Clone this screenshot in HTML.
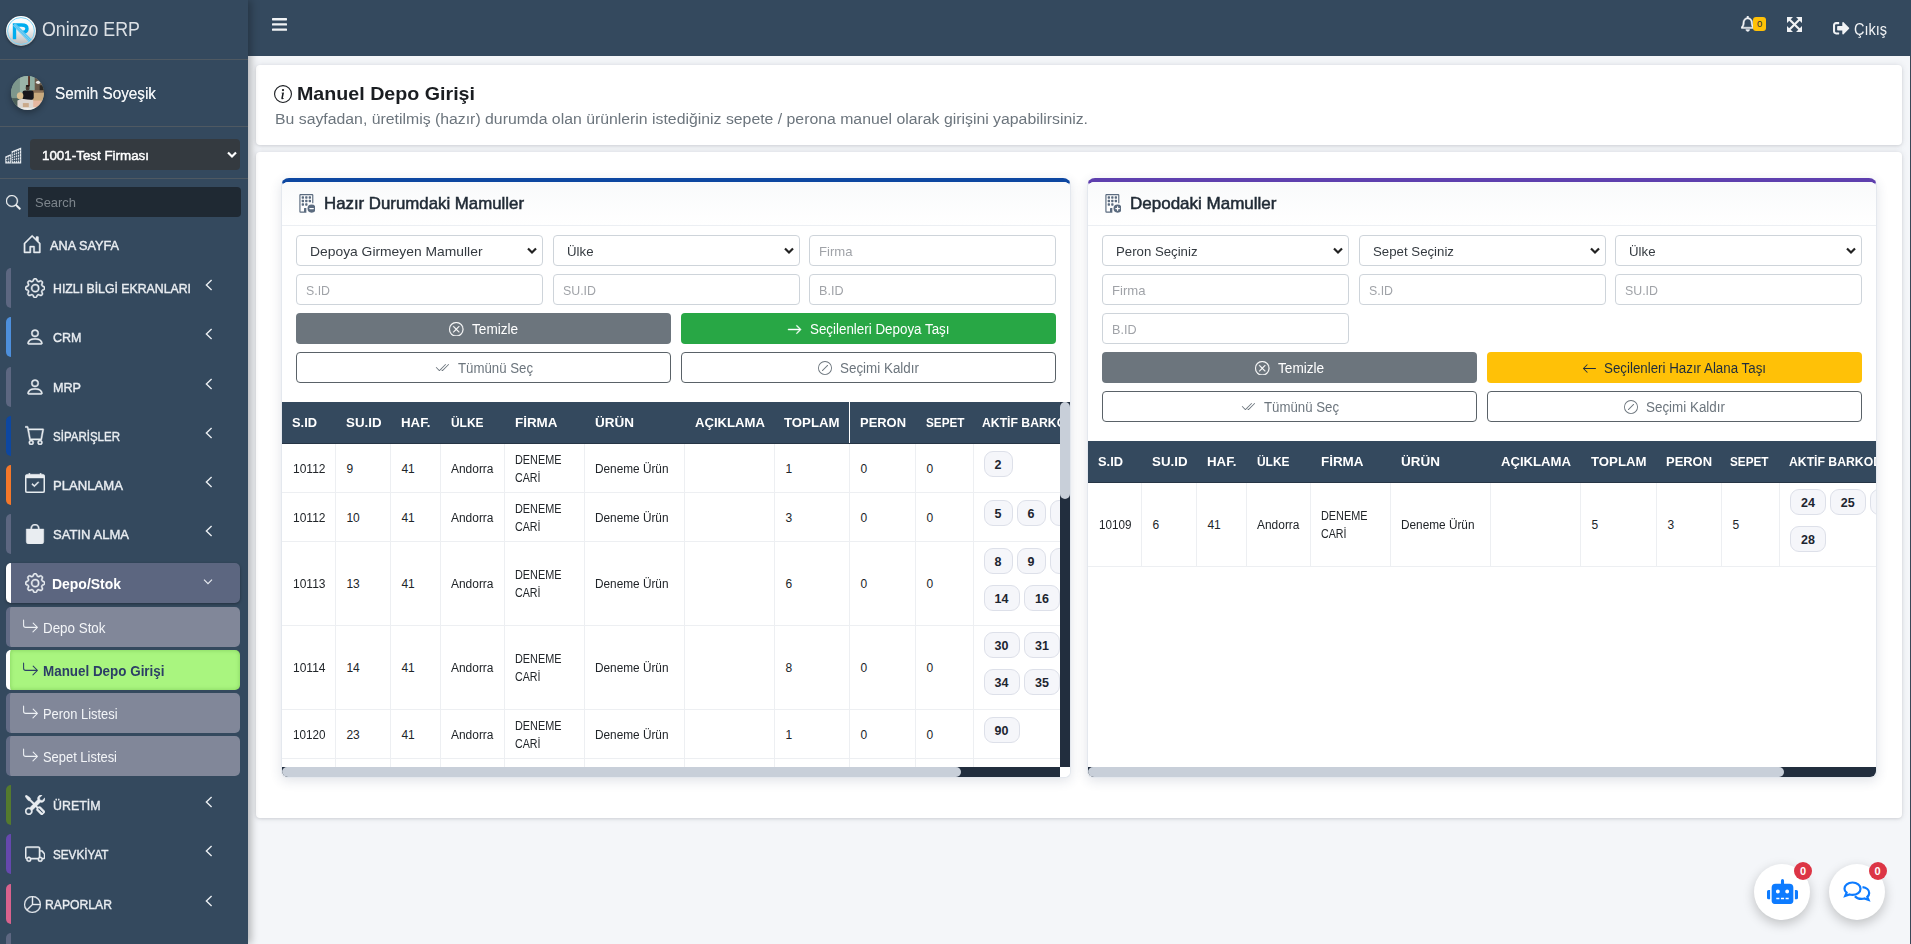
<!DOCTYPE html>
<html lang="tr"><head>
<meta charset="utf-8">
<title>Manuel Depo Girişi</title>
<style>
*{box-sizing:border-box;margin:0;padding:0}
html,body{width:1911px;height:944px;overflow:hidden}
body{position:relative;background:#f4f6f9;font-family:"Liberation Sans",sans-serif;color:#212529;font-size:14px}
.abs{position:absolute}
.fx{display:inline-block;white-space:nowrap;transform-origin:0 50%}
svg{display:block;position:absolute}
/* sidebar */
#sb{position:absolute;left:0;top:0;width:248px;height:944px;background:#34495e;box-shadow:3px 0 8px rgba(0,0,0,.28);z-index:5;overflow:hidden}
#sb .hr{position:absolute;left:0;width:248px;height:1px;background:#4f5962}
.mi{position:absolute;left:6px;width:234px;height:40px;border-left:5px solid #5d6781;border-radius:5px 0 0 5px}
.mi .tx{position:absolute;left:41.5px;top:0;height:40px;line-height:41px;font-size:13.5px;font-weight:normal;-webkit-text-stroke:.4px #e9edf1;color:#e9edf1}
.mi svg.ic{left:14px;top:10px;width:20px;height:20px;fill:#e9edf1;stroke:#e9edf1;stroke-width:.35}
.mi svg.ch{left:192.7px;top:11px;width:10px;height:12px;fill:none;stroke:#e9edf1;stroke-width:1.4}
.si{position:absolute;left:6px;width:234px;height:40px;background:#818799;border-left:4px solid #636c86;border-radius:5px}
.si .tx{position:absolute;left:32.5px;top:0;height:40px;line-height:42.6px;font-size:14px;color:#f3f5f8}
.si svg{left:11.5px;top:11px;width:17px;height:17px;fill:#eef1f5}
/* topbar */
#tb{position:absolute;left:248px;top:0;width:1663px;height:56px;background:#34495e;z-index:3}
#tb svg{fill:#f1f3f5}
/* cards */
.card{position:absolute;background:#fff;border-radius:4px;box-shadow:0 0 6px rgba(60,70,90,.13),0 1px 3px rgba(0,0,0,.10)}
.pn{position:absolute;top:178px;width:790px;height:600px;background:#fff;border-radius:8px 8px 6px 6px;box-shadow:0 3px 12px rgba(40,60,90,.14);border:1px solid #e4e8ee;border-top:4px solid #000;overflow:hidden}
.pn .top{position:absolute;left:-1px;top:0;width:788px;height:3.5px}
.pn .hd{position:absolute;left:0;top:0;width:788px;height:44px;border-bottom:1px solid #eceff3;background:linear-gradient(#f9fafb,#fff)}
.pn .hd .tt{position:absolute;top:0;height:44px;line-height:43.4px;font-size:16.2px;font-weight:normal;-webkit-text-stroke:.5px #212b36;color:#212b36}
.inp{position:absolute;height:31px;width:247px;border:1px solid #ced4da;border-radius:4px;background:#fff;font-size:13.5px;line-height:31px}
.inp .ph{position:absolute;left:8.5px;top:0;color:#a0a3a8}
.inp .vl{position:absolute;left:13px;top:0;color:#343a40}
.inp svg{right:5px;top:10.5px;width:10px;height:8px;fill:none;stroke:#222;stroke-width:2.2}
.btn{position:absolute;height:31px;width:375px;border-radius:4px;font-size:14px;line-height:33.6px}
.btn .tx{position:absolute;top:0}
.btn svg{top:8.6px;width:15px;height:15px}
.b-gray{background:#6c757d;color:#fff}.b-gray svg{fill:#fff;stroke:#fff;stroke-width:.3}
.b-green{background:#28a745;color:#fff}.b-green svg{fill:#fff;stroke:#fff;stroke-width:.5}
.b-yel{background:#ffc107;color:#1f2d3d}.b-yel svg{fill:#1f2d3d}
.b-out{background:#fff;border:1px solid #5a6268;color:#6c757d;line-height:31px}.b-out svg{fill:#6c757d;top:8px}
/* table */
.tw{position:absolute;overflow:hidden;background:#fff}
.th{position:absolute;left:0;top:0;height:42px;background:#34495e;border-bottom:1px solid #263545}
.th span{position:absolute;top:0;height:41px;line-height:42px;font-size:13px;font-weight:bold;color:#fff}
.vl1{position:absolute;width:1px;background:#edeff2}
.hl1{position:absolute;height:1px;background:#edeff2;left:0}
.c{position:absolute;font-size:12px;color:#212529;line-height:18px;white-space:nowrap}
.bd{position:absolute;height:26px;border:1px solid #dde0e9;background:#f5f6fa;border-radius:9px;font-size:12.5px;font-weight:bold;color:#1d2530;text-align:center;line-height:26.6px}
.fab{position:absolute;width:56px;height:56px;border-radius:50%;background:#fff;box-shadow:0 4px 12px rgba(0,0,0,.22)}
.fab svg{fill:#0d7bff}
.rb{position:absolute;width:18px;height:18px;border-radius:50%;background:#dc3545;color:#fff;font-size:11px;font-weight:bold;text-align:center;line-height:18px}
</style>
</head>
<body>
<div id="sb">
<div class="abs" style="left:6px;top:15.8px;width:30px;height:30px;border-radius:50%;background:linear-gradient(#fff 0,#f8f8f8 38%,#d4d4d4 72%,#b4b4b4 100%);box-shadow:0 1px 3px rgba(0,0,0,.4);overflow:hidden"><svg viewBox="0 0 30 30" style="left:0;top:0;width:30px;height:30px"><circle cx="15" cy="15" r="13.4" fill="none" stroke="#7fd4f6" stroke-width="1"></circle><path d="M8.500 23.200V9H15.600C19.600 9 21 10.800 21 12.700 21 14.900 19.300 16.200 16.600 16.400" fill="none" stroke="#00adef" stroke-width="3.400" stroke-linejoin="miter"></path><path d="M8.200 8.600 24.300 24.700" stroke="#43bdf0" stroke-width="3.600" fill="none"></path><path d="M8.200 8.600 24.300 24.700" stroke="#bfe8fa" stroke-width="3.200" stroke-dasharray=".7 .7" fill="none" opacity=".55"></path></svg></div>
<div class="abs" style="left:41.5px;top:17.3px;font-size:19.6px;line-height:24px;color:#eef1f4;opacity:.9"><span class="fx" style="transform: scaleX(0.9089); margin-right: -9.83px;">Oninzo ERP</span></div>
<div class="hr" style="top:59px"></div>
<div class="abs" style="left:10.800px;top:75.700px;width:33.600px;height:34.400px;border-radius:50%;box-shadow:0 3px 6px rgba(0,0,0,.3);overflow:hidden;background:#7f998f"><svg viewBox="0 0 34 34" style="left:0;top:0;width:33.600px;height:34.400px"><defs><filter id="bl" x="-10%" y="-10%" width="120%" height="120%"><feGaussianBlur stdDeviation=".5"></feGaussianBlur></filter></defs><g filter="url(#bl)"><rect x="-2" y="-2" width="38" height="38" fill="#7d978c"></rect><rect x="9" y="-2" width="9" height="22" fill="#9bb5a8"></rect><rect x="19" y="-2" width="6" height="16" fill="#8fada3"></rect><rect x="17.300" y="-2" width="1.900" height="12" fill="#5a3326"></rect><rect x="24" y="-2" width="12" height="18" fill="#6b5a4c"></rect><ellipse cx="27.500" cy="6" rx="2.200" ry="1.600" fill="#e8e6e6"></ellipse><rect x="29" y="9" width="6" height="7" fill="#2a2623"></rect><rect x="21" y="14" width="12" height="3" fill="#8a6f55"></rect><rect x="0" y="22" width="8" height="12" fill="#4c5f58"></rect><rect x="21" y="16.500" width="14" height="8.500" rx="1.500" fill="#c9aa7e"></rect><rect x="22" y="24.500" width="14" height="8" fill="#e6b79f"></rect><rect x="11.500" y="14.300" width="11.500" height="9.500" rx="2.500" fill="#15171a"></rect><ellipse cx="16.800" cy="11.800" rx="2" ry="2.600" fill="#4a3a30"></ellipse><rect x="15" y="8.800" width="3.600" height="1.800" rx=".9" fill="#1c1815"></rect><ellipse cx="9.200" cy="19.600" rx="3.300" ry="3.600" fill="#d9bf92"></ellipse><path d="M6.500 24.500C9 22.500 14 22.500 16.500 23.500L22.500 24V31.500H6.500z" fill="#dcd6d1"></path><rect x="12" y="27" width="6" height="5" fill="#c9a98a"></rect><rect x="-2" y="31.300" width="38" height="4" fill="#eceae8"></rect></g></svg></div>
<div class="abs" style="left:54.5px;top:82.2px;font-size:16px;line-height:24px;color:#eef1f4;text-shadow:0 0 .4px #eef1f4"><span class="fx" style="transform: scaleX(0.9544); margin-right: -4.83px;">Semih Soyeşik</span></div>
<div class="hr" style="top:126px"></div>
<svg viewBox="0 0 17 17" style="left:5px;top:146.5px;width:17px;height:17px"><path d="M6.3 16.4V4.5L16.2.4v16z" fill="#e9edf1"></path><path d="M.3 16.400V9.400l6-2.300v9.300z" fill="#e9edf1"></path><g stroke="#34495e" stroke-width=".9" fill="none"><path d="M8.400 5v10.300M10.400 4.200v11.100M12.400 3.400v11.900M14.400 2.600v12.700"></path><path d="M7.200 6.900l8.200-3.300M7.200 9.300l8.200-2.600M7.200 11.600l8.200-1.800M7.200 13.800l8.200-.9"></path><path d="M2.300 9.800v5.500M4.300 9v6.300M1.200 11.600l4.300-1.300M1.200 13.700l4.300-.8"></path></g><path d="M6.300 16.400V4.500" stroke="#34495e" stroke-width=".6"></path></svg>
<div class="abs" style="left:30px;top:139px;width:210px;height:31px;border-radius:4px;background:#343a40"><div class="abs" style="left:12px;top:0;line-height:33.4px;font-size:13.5px;-webkit-text-stroke:.45px #fff;color:#fff"><span class="fx" style="transform: scaleX(0.9903); margin-right: -1.05px;">1001-Test Firması</span></div><svg viewBox="0 0 10 8" style="left:197px;top:11.5px;width:10px;height:8px" fill="none" stroke="#fff" stroke-width="2.2"><path d="M1 1.5l4 4 4-4"></path></svg></div>
<div class="hr" style="top:178px"></div>
<svg style="left:6px;top:195px;width:14.6px;height:14.6px;fill:#f1f3f5;stroke:#f1f3f5;stroke-width:.4" viewBox="0 0 16 16"><path d="M11.742 10.344a6.5 6.5 0 1 0-1.397 1.398h-.001c.03.04.062.078.098.115l3.85 3.85a1 1 0 0 0 1.415-1.414l-3.85-3.85a1.007 1.007 0 0 0-.115-.1zM12 6.5a5.5 5.5 0 1 1-11 0 5.5 5.5 0 0 1 11 0z"></path></svg>
<div class="abs" style="left:28px;top:187px;width:213px;height:30px;border-radius:0 4px 4px 0;background:#1f2933"><div class="abs" style="left:7px;top:0;line-height:32px;font-size:13px;color:#7d858c"><span class="fx" style="transform: scaleX(0.9951); margin-right: -0.2px;">Search</span></div></div>
<svg style="left:21.9px;top:233.7px;width:20.3px;height:20.3px;fill:#e9edf1;stroke:#e9edf1;stroke-width:.35" viewBox="0 0 16 16"><path d="M8.354 1.146a.5.5 0 0 0-.708 0l-6 6A.5.5 0 0 0 1.5 7.5v7a.5.5 0 0 0 .5.5h4.5a.5.5 0 0 0 .5-.5v-4h2v4a.5.5 0 0 0 .5.5H14a.5.5 0 0 0 .5-.5v-7a.5.5 0 0 0-.146-.354L13 5.793V2.5a.5.5 0 0 0-.5-.5h-1a.5.5 0 0 0-.5.5v1.293L8.354 1.146zM2.5 14V7.707l5.5-5.5 5.5 5.5V14H10v-4a.5.5 0 0 0-.5-.5h-3a.5.5 0 0 0-.5.5v4H2.5z"></path></svg>
<div class="abs" style="left:49.5px;top:225px;line-height:41px;font-size:13px;-webkit-text-stroke:.4px #e9edf1;color:#e9edf1"><span class="fx" style="transform: scaleX(0.9776); margin-right: -1.58px;">ANA SAYFA</span></div>
<div class="mi" style="top:268px;border-left-color:#5d6781"><svg class="ic" style="left:14px;top:9.7px;width:20.3px;height:20.3px" viewBox="0 0 16 16"><path d="M8 4.754a3.246 3.246 0 1 0 0 6.492 3.246 3.246 0 0 0 0-6.492zM5.754 8a2.246 2.246 0 1 1 4.492 0 2.246 2.246 0 0 1-4.492 0z"></path><path d="M9.796 1.343c-.527-1.79-3.065-1.79-3.592 0l-.094.319a.873.873 0 0 1-1.255.52l-.292-.16c-1.64-.892-3.433.902-2.54 2.541l.159.292a.873.873 0 0 1-.52 1.255l-.319.094c-1.79.527-1.79 3.065 0 3.592l.319.094a.873.873 0 0 1 .52 1.255l-.16.292c-.892 1.64.901 3.434 2.541 2.54l.292-.159a.873.873 0 0 1 1.255.52l.094.319c.527 1.79 3.065 1.79 3.592 0l.094-.319a.873.873 0 0 1 1.255-.52l.292.16c1.64.893 3.434-.902 2.54-2.541l-.159-.292a.873.873 0 0 1 .52-1.255l.319-.094c1.79-.527 1.79-3.065 0-3.592l-.319-.094a.873.873 0 0 1-.52-1.255l.16-.292c.893-1.64-.902-3.433-2.541-2.54l-.292.159a.873.873 0 0 1-1.255-.52l-.094-.319zm-2.633.283c.246-.835 1.428-.835 1.674 0l.094.319a1.873 1.873 0 0 0 2.693 1.115l.291-.16c.764-.415 1.6.42 1.184 1.185l-.159.292a1.873 1.873 0 0 0 1.116 2.692l.318.094c.835.246.835 1.428 0 1.674l-.319.094a1.873 1.873 0 0 0-1.115 2.693l.16.291c.415.764-.42 1.6-1.185 1.184l-.291-.159a1.873 1.873 0 0 0-2.693 1.116l-.094.318c-.246.835-1.428.835-1.674 0l-.094-.319a1.873 1.873 0 0 0-2.692-1.115l-.292.16c-.764.415-1.6-.42-1.184-1.185l.159-.291A1.873 1.873 0 0 0 1.945 8.93l-.319-.094c-.835-.246-.835-1.428 0-1.674l.319-.094A1.873 1.873 0 0 0 3.06 4.377l-.16-.292c-.415-.764.42-1.6 1.185-1.184l.292.159a1.873 1.873 0 0 0 2.692-1.115l.094-.319z"></path></svg><div class="tx" style="left:41.5px"><span class="fx" style="transform: scaleX(0.9106); margin-right: -13.55px;">HIZLI BİLGİ EKRANLARI</span></div><svg class="ch" viewBox="0 0 10 12"><path d="M7.6 1 2.4 6l5.2 5"></path></svg></div>
<div class="mi" style="top:317px;border-left-color:#4d8fdc"><svg class="ic" style="left:14.4px;top:9.5px;width:20px;height:20px" viewBox="0 0 16 16"><path d="M8 8a3 3 0 1 0 0-6 3 3 0 0 0 0 6zm2-3a2 2 0 1 1-4 0 2 2 0 0 1 4 0zm4 8c0 1-1 1-1 1H3s-1 0-1-1 1-4 6-4 6 3 6 4zm-1-.004c-.001-.246-.154-.986-.832-1.664C11.516 10.68 10.289 10 8 10c-2.29 0-3.516.68-4.168 1.332-.678.678-.83 1.418-.832 1.664h10z"></path></svg><div class="tx" style="left:41.5px"><span class="fx" style="transform: scaleX(0.9268); margin-right: -2.25px;">CRM</span></div><svg class="ch" viewBox="0 0 10 12"><path d="M7.6 1 2.4 6l5.2 5"></path></svg></div>
<div class="mi" style="top:367px;border-left-color:#5d6781"><svg class="ic" style="left:14.4px;top:9.5px;width:20px;height:20px" viewBox="0 0 16 16"><path d="M8 8a3 3 0 1 0 0-6 3 3 0 0 0 0 6zm2-3a2 2 0 1 1-4 0 2 2 0 0 1 4 0zm4 8c0 1-1 1-1 1H3s-1 0-1-1 1-4 6-4 6 3 6 4zm-1-.004c-.001-.246-.154-.986-.832-1.664C11.516 10.68 10.289 10 8 10c-2.29 0-3.516.68-4.168 1.332-.678.678-.83 1.418-.832 1.664h10z"></path></svg><div class="tx" style="left:41.5px"><span class="fx" style="transform: scaleX(0.9333); margin-right: -2px;">MRP</span></div><svg class="ch" viewBox="0 0 10 12"><path d="M7.6 1 2.4 6l5.2 5"></path></svg></div>
<div class="mi" style="top:416px;border-left-color:#0d47a1"><svg class="ic" style="left:14.2px;top:8.5px;width:20px;height:20px" viewBox="0 0 16 16"><path d="M0 1.5A.5.5 0 0 1 .5 1H2a.5.5 0 0 1 .485.379L2.89 3H14.5a.5.5 0 0 1 .491.592l-1.5 8A.5.5 0 0 1 13 12H4a.5.5 0 0 1-.491-.408L2.01 3.607 1.61 2H.5a.5.5 0 0 1-.5-.5zM3.102 4l1.313 7h8.17l1.313-7H3.102zM5 12a2 2 0 1 0 0 4 2 2 0 0 0 0-4zm7 0a2 2 0 1 0 0 4 2 2 0 0 0 0-4zm-7 1a1 1 0 1 1 0 2 1 1 0 0 1 0-2zm7 0a1 1 0 1 1 0 2 1 1 0 0 1 0-2z"></path></svg><div class="tx" style="left:41.5px"><span class="fx" style="transform: scaleX(0.8532); margin-right: -11.53px;">SİPARİŞLER</span></div><svg class="ch" viewBox="0 0 10 12"><path d="M7.6 1 2.4 6l5.2 5"></path></svg></div>
<div class="mi" style="top:465px;border-left-color:#f4772a"><svg class="ic" style="left:14.2px;top:7.9px;width:20px;height:20px" viewBox="0 0 16 16"><path d="M10.854 7.146a.5.5 0 0 1 0 .708l-3 3a.5.5 0 0 1-.708 0l-1.5-1.5a.5.5 0 1 1 .708-.708L7.5 9.793l2.646-2.647a.5.5 0 0 1 .708 0z"></path><path d="M3.5 0a.5.5 0 0 1 .5.5V1h8V.5a.5.5 0 0 1 1 0V1h1a2 2 0 0 1 2 2v11a2 2 0 0 1-2 2H2a2 2 0 0 1-2-2V3a2 2 0 0 1 2-2h1V.5a.5.5 0 0 1 .5-.5zM1 4v10a1 1 0 0 0 1 1h12a1 1 0 0 0 1-1V4H1z"></path></svg><div class="tx" style="left:41.5px"><span class="fx" style="transform: scaleX(0.9718); margin-right: -2.03px;">PLANLAMA</span></div><svg class="ch" viewBox="0 0 10 12"><path d="M7.6 1 2.4 6l5.2 5"></path></svg></div>
<div class="mi" style="top:514px;border-left-color:#5d6781"><svg class="ic" style="left:14.2px;top:9.6px;width:20px;height:20px" viewBox="0 0 16 16"><path d="M8 1a2.5 2.5 0 0 1 2.5 2.5V4h-5v-.5A2.5 2.5 0 0 1 8 1zm3.5 3v-.5a3.5 3.5 0 1 0-7 0V4H1v10a2 2 0 0 0 2 2h10a2 2 0 0 0 2-2V4h-3.5z"></path></svg><div class="tx" style="left:41.5px"><span class="fx" style="transform: scaleX(0.9678); margin-right: -2.53px;">SATIN ALMA</span></div><svg class="ch" viewBox="0 0 10 12"><path d="M7.6 1 2.4 6l5.2 5"></path></svg></div>
<div class="mi" style="top:785px;border-left-color:#547a2e"><svg class="ic" style="left:14.2px;top:9.8px;width:20px;height:20px" viewBox="0 0 16 16"><path d="M1 0 0 1l2.2 3.081a1 1 0 0 0 .815.419h.07a1 1 0 0 1 .708.293l2.675 2.675-2.617 2.654A3.003 3.003 0 0 0 0 13a3 3 0 1 0 5.878-.851l2.654-2.617.968.968-.305.914a1 1 0 0 0 .242 1.023l3.27 3.27a.997.997 0 0 0 1.414 0l1.586-1.586a.997.997 0 0 0 0-1.414l-3.27-3.27a1 1 0 0 0-1.023-.242L10.5 9.5l-.96-.96 2.68-2.643A3.005 3.005 0 0 0 16 3c0-.269-.035-.53-.102-.777l-2.14 2.141L12 4l-.364-1.757L13.777.102a3 3 0 0 0-3.675 3.68L7.462 6.46 4.793 3.793a1 1 0 0 1-.293-.707v-.071a1 1 0 0 0-.419-.814L1 0zm9.646 10.646a.5.5 0 0 1 .708 0l2.914 2.915a.5.5 0 0 1-.707.707l-2.915-2.914a.5.5 0 0 1 0-.708zM3 11l.471.242.529.026.287.445.445.287.026.529L5 13l-.242.471-.026.529-.445.287-.287.445-.529.026L3 15l-.471-.242L2 14.732l-.287-.445L1.268 14l-.026-.529L1 13l.242-.471.026-.529.445-.287.287-.445.529-.026L3 11z"></path></svg><div class="tx" style="left:41.5px"><span class="fx" style="transform: scaleX(0.9179); margin-right: -4.25px;">ÜRETİM</span></div><svg class="ch" viewBox="0 0 10 12"><path d="M7.6 1 2.4 6l5.2 5"></path></svg></div>
<div class="mi" style="top:834px;border-left-color:#6548ae"><svg class="ic" style="left:14px;top:9.5px;width:20.3px;height:20.3px" viewBox="0 0 16 16"><path d="M0 3.5A1.5 1.5 0 0 1 1.5 2h9A1.5 1.5 0 0 1 12 3.5V5h1.02a1.5 1.5 0 0 1 1.17.563l1.481 1.85a1.5 1.5 0 0 1 .329.938V10.5a1.5 1.5 0 0 1-1.5 1.5H14a2 2 0 1 1-4 0H5a2 2 0 1 1-3.998-.085A1.5 1.5 0 0 1 0 10.5v-7zm1.294 7.456A1.999 1.999 0 0 1 4.732 11h5.536a2.01 2.01 0 0 1 .732-.732V3.5a.5.5 0 0 0-.5-.5h-9a.5.5 0 0 0-.5.5v7a.5.5 0 0 0 .294.456zM12 10a2 2 0 0 1 1.732 1h.768a.5.5 0 0 0 .5-.5V8.35a.5.5 0 0 0-.11-.312l-1.48-1.85A.5.5 0 0 0 13.02 6H12v4zm-9 1a1 1 0 1 0 0 2 1 1 0 0 0 0-2zm9 0a1 1 0 1 0 0 2 1 1 0 0 0 0-2z"></path></svg><div class="tx" style="left:41.5px"><span class="fx" style="transform: scaleX(0.8668); margin-right: -8.53px;">SEVKİYAT</span></div><svg class="ch" viewBox="0 0 10 12"><path d="M7.6 1 2.4 6l5.2 5"></path></svg></div>
<div class="mi" style="top:884px;border-left-color:#d9628d"><svg class="ic" style="left:13.3px;top:11.6px;width:17px;height:17px" viewBox="0 0 16 16"><path d="M7.5 1.018a7 7 0 0 0-4.79 11.566L7.5 7.793V1.018zm1 0V7.5h6.482A7.001 7.001 0 0 0 8.5 1.018zM14.982 8.5H8.207l-4.79 4.79A7 7 0 0 0 14.982 8.5zM0 8a8 8 0 1 1 16 0A8 8 0 0 1 0 8z"></path></svg><div class="tx" style="left:34.3px"><span class="fx" style="transform: scaleX(0.902); margin-right: -7.28px;">RAPORLAR</span></div><svg class="ch" viewBox="0 0 10 12"><path d="M7.6 1 2.4 6l5.2 5"></path></svg></div>
<div class="mi" style="top:933px"></div>
<div class="mi" style="top:563px;border-left-color:#fff;background:#5c6680;border-radius:5px;box-shadow:0 1px 3px rgba(0,0,0,.35)"><svg class="ic" style="left:14px;top:9.7px;width:20.3px;height:20.3px" viewBox="0 0 16 16"><path d="M8 4.754a3.246 3.246 0 1 0 0 6.492 3.246 3.246 0 0 0 0-6.492zM5.754 8a2.246 2.246 0 1 1 4.492 0 2.246 2.246 0 0 1-4.492 0z"></path><path d="M9.796 1.343c-.527-1.79-3.065-1.79-3.592 0l-.094.319a.873.873 0 0 1-1.255.52l-.292-.16c-1.64-.892-3.433.902-2.54 2.541l.159.292a.873.873 0 0 1-.52 1.255l-.319.094c-1.79.527-1.79 3.065 0 3.592l.319.094a.873.873 0 0 1 .52 1.255l-.16.292c-.892 1.64.901 3.434 2.541 2.54l.292-.159a.873.873 0 0 1 1.255.52l.094.319c.527 1.79 3.065 1.79 3.592 0l.094-.319a.873.873 0 0 1 1.255-.52l.292.16c1.64.893 3.434-.902 2.54-2.541l-.159-.292a.873.873 0 0 1 .52-1.255l.319-.094c1.79-.527 1.79-3.065 0-3.592l-.319-.094a.873.873 0 0 1-.52-1.255l.16-.292c.893-1.64-.902-3.433-2.541-2.54l-.292.159a.873.873 0 0 1-1.255-.52l-.094-.319zm-2.633.283c.246-.835 1.428-.835 1.674 0l.094.319a1.873 1.873 0 0 0 2.693 1.115l.291-.16c.764-.415 1.6.42 1.184 1.185l-.159.292a1.873 1.873 0 0 0 1.116 2.692l.318.094c.835.246.835 1.428 0 1.674l-.319.094a1.873 1.873 0 0 0-1.115 2.693l.16.291c.415.764-.42 1.6-1.185 1.184l-.291-.159a1.873 1.873 0 0 0-2.693 1.116l-.094.318c-.246.835-1.428.835-1.674 0l-.094-.319a1.873 1.873 0 0 0-2.692-1.115l-.292.16c-.764.415-1.6-.42-1.184-1.185l.159-.291A1.873 1.873 0 0 0 1.945 8.93l-.319-.094c-.835-.246-.835-1.428 0-1.674l.319-.094A1.873 1.873 0 0 0 3.06 4.377l-.16-.292c-.415-.764.42-1.6 1.185-1.184l.292.159a1.873 1.873 0 0 0 2.692-1.115l.094-.319z"></path></svg><div class="tx" style="left:40.7px;color:#fff;font-size:14px;font-weight:bold;-webkit-text-stroke:0;line-height:42.6px"><span class="fx" style="transform: scaleX(0.9966); margin-right: -0.23px;">Depo/Stok</span></div><svg class="ch" viewBox="0 0 12 10" style="left:191px;top:15px;width:12px;height:8px"><path d="M1 2l5 5 5-5"></path></svg></div>
<div class="si" style="top:607px"><svg viewBox="0 0 16 16"><path fill-rule="evenodd" d="M1.5 1.5A.5.5 0 0 0 1 2v4.8a2.5 2.5 0 0 0 2.5 2.5h9.793l-3.347 3.346a.5.5 0 0 0 .708.708l4.2-4.2a.5.5 0 0 0 0-.708l-4-4a.5.5 0 0 0-.708.708L13.293 8.3H3.5A1.5 1.5 0 0 1 2 6.8V2a.5.5 0 0 0-.5-.5z"></path></svg><div class="tx"><span class="fx" style="transform: scaleX(0.956); margin-right: -2.88px;">Depo Stok</span></div></div>
<div class="si" style="top:650px;background:#a9f57f;border-left-color:#fff;box-shadow:inset 0 0 4px rgba(60,140,30,.35)"><svg style="fill:#2c3e66" viewBox="0 0 16 16"><path fill-rule="evenodd" d="M1.5 1.5A.5.5 0 0 0 1 2v4.8a2.5 2.5 0 0 0 2.5 2.5h9.793l-3.347 3.346a.5.5 0 0 0 .708.708l4.2-4.2a.5.5 0 0 0 0-.708l-4-4a.5.5 0 0 0-.708.708L13.293 8.3H3.5A1.5 1.5 0 0 1 2 6.8V2a.5.5 0 0 0-.5-.5z"></path></svg><div class="tx" style="color:#2c3e66;font-weight:bold;font-size:14px;left:33px"><span class="fx" style="transform: scaleX(0.9581); margin-right: -5.31px;">Manuel Depo Girişi</span></div></div>
<div class="si" style="top:693px"><svg viewBox="0 0 16 16"><path fill-rule="evenodd" d="M1.5 1.5A.5.5 0 0 0 1 2v4.8a2.5 2.5 0 0 0 2.5 2.5h9.793l-3.347 3.346a.5.5 0 0 0 .708.708l4.2-4.2a.5.5 0 0 0 0-.708l-4-4a.5.5 0 0 0-.708.708L13.293 8.3H3.5A1.5 1.5 0 0 1 2 6.8V2a.5.5 0 0 0-.5-.5z"></path></svg><div class="tx"><span class="fx" style="transform: scaleX(0.9205); margin-right: -6.44px;">Peron Listesi</span></div></div>
<div class="si" style="top:736px"><svg viewBox="0 0 16 16"><path fill-rule="evenodd" d="M1.5 1.5A.5.5 0 0 0 1 2v4.8a2.5 2.5 0 0 0 2.5 2.5h9.793l-3.347 3.346a.5.5 0 0 0 .708.708l4.2-4.2a.5.5 0 0 0 0-.708l-4-4a.5.5 0 0 0-.708.708L13.293 8.3H3.5A1.5 1.5 0 0 1 2 6.8V2a.5.5 0 0 0-.5-.5z"></path></svg><div class="tx"><span class="fx" style="transform: scaleX(0.923); margin-right: -6.17px;">Sepet Listesi</span></div></div>
</div>
<div id="tb">
<svg viewBox="0 0 15 13" style="left:24px;top:17.5px;width:15px;height:13px"><rect x="0" y="0" width="15" height="2.4" rx=".6"></rect><rect x="0" y="5.2" width="15" height="2.4" rx=".6"></rect><rect x="0" y="10.4" width="15" height="2.4" rx=".6"></rect></svg>
<svg viewBox="0 0 448 512" style="left:1493px;top:16px;width:13.5px;height:15.5px;stroke:#f1f3f5;stroke-width:14"><path d="M439.4 362.3c-19.3-20.8-55.5-52-55.5-154.3 0-77.700-54.500-139.900-127.900-155.200V32c0-17.700-14.300-32-32-32s-32 14.300-32 32v20.800C118.600 68.100 64.100 130.300 64.100 208c0 102.300-36.200 133.500-55.500 154.300-6 6.400-8.600 14.100-8.600 21.700.1 16.400 13 32 32.100 32h383.800c19.100 0 32-15.600 32.100-32 0-7.600-2.600-15.300-8.600-21.700zM67.500 368c21.200-28 44.400-74.300 44.500-159.400 0-.2-.1-.4-.1-.6 0-61.900 50.100-112 112-112s112 50.100 112 112c0 .2-.1.4-.1.6.1 85.100 23.300 131.500 44.500 159.400H67.500zM224 512c35.300 0 64-28.700 64-64H160c0 35.300 28.700 64 64 64z"></path></svg>
<div class="abs" style="left:1505.3px;top:17px;width:12.7px;height:14px;border-radius:3px;background:#ffc107;color:#1f2d3d;font-size:9.5px;line-height:14px;text-align:center">0</div>
<svg viewBox="0 0 16 16" style="left:1539px;top:16.500px;width:15px;height:15px"><path d="M0 0h6.400L0 6.400zM16 0v6.400L9.600 0zM0 16V9.600L6.400 16zM16 16H9.600L16 9.600z"></path><path d="M2.600 1l12.400 12.400-1.600 1.600L1 2.600z"></path><path d="M13.400 1L15 2.600 2.600 15 1 13.400z"></path></svg>
<svg viewBox="0 0 512 512" style="left:1585px;top:19.8px;width:16.5px;height:16.5px"><path d="M497 273L329 441c-15 15-41 4.500-41-17v-96H152c-13.300 0-24-10.700-24-24v-96c0-13.300 10.700-24 24-24h136V88c0-21.400 25.900-32 41-17l168 168c9.300 9.400 9.300 24.600 0 34zM192 436v-40c0-6.600-5.400-12-12-12H96c-17.700 0-32-14.300-32-32V160c0-17.700 14.300-32 32-32h84c6.600 0 12-5.400 12-12V76c0-6.600-5.400-12-12-12H96c-53 0-96 43-96 96v192c0 53 43 96 96 96h84c6.600 0 12-5.400 12-12z"></path></svg>
<div class="abs" style="left:1605.5px;top:17.3px;font-size:16.5px;line-height:24px;color:#f1f3f5"><span class="fx" style="transform: scaleX(0.8778); margin-right: -4.59px;">Çıkış</span></div>
</div>
<div class="abs" style="left:1910px;top:56px;width:1px;height:888px;background:#3a4757"></div>
<div class="card" style="left:256px;top:65px;width:1646px;height:80px">
<svg style="left:18px;top:19.5px;width:18px;height:18px;fill:#1a1d21" viewBox="0 0 16 16"><path d="M8 15A7 7 0 1 1 8 1a7 7 0 0 1 0 14zm0 1A8 8 0 1 0 8 0a8 8 0 0 0 0 16z"></path><path d="m8.93 6.588-2.29.287-.082.38.45.083c.294.07.352.176.288.469l-.738 3.468c-.194.897.105 1.319.808 1.319.545 0 1.178-.252 1.465-.598l.088-.416c-.2.176-.492.246-.686.246-.275 0-.375-.193-.304-.533L8.93 6.588zM9 4.5a1 1 0 1 1-2 0 1 1 0 0 1 2 0z"></path></svg>
<div class="abs" style="left:41px;top:16.2px;font-size:17.8px;line-height:26px;font-weight:bold;color:#1a1d21"><span class="fx" style="transform: scaleX(1.1052); margin-right: 16.94px;">Manuel Depo Girişi</span></div>
<div class="abs" style="left:18.5px;top:43.5px;font-size:14px;line-height:20px;color:#6c757d"><span class="fx" style="transform: scaleX(1.1295); margin-right: 93.19px;">Bu sayfadan, üretilmiş (hazır) durumda olan ürünlerin istediğiniz sepete / perona manuel olarak girişini yapabilirsiniz.</span></div>
</div>
<div class="card" style="left:256px;top:152px;width:1646px;height:666px"></div>
<div class="pn" style="left:281px;border-top-color:#0d47a1"><div class="hd">
<svg viewBox="0 0 16 16" style="left:14.7px;top:12.1px;width:18.7px;height:18.7px;fill:#5b6b7f"><path d="M12.5 16a3.5 3.5 0 1 0 0-7 3.5 3.5 0 0 0 0 7zM11 12h3a.5.5 0 0 1 0 1h-3a.5.5 0 0 1 0-1z"></path><path d="M2 1a1 1 0 0 1 1-1h10a1 1 0 0 1 1 1v6.5a.5.5 0 0 1-1 0V1H3v14h3v-2.5a.5.5 0 0 1 .5-.5H8v4H3a1 1 0 0 1-1-1V1z"></path><rect x="4" y="2" width="2" height="2" rx=".5"></rect><rect x="7" y="2" width="2" height="2" rx=".5"></rect><rect x="10" y="2" width="2" height="2" rx=".5"></rect><rect x="4" y="5" width="2" height="2" rx=".5"></rect><rect x="7" y="5" width="2" height="2" rx=".5"></rect><rect x="10" y="5" width="2" height="2" rx=".5"></rect><rect x="4" y="8" width="2" height="2" rx=".5"></rect><rect x="7" y="8" width="2" height="2" rx=".5"></rect></svg>
<div class="tt" style="left:41.6px"><span class="fx" style="transform: scaleX(1.039); margin-right: 7.5px;">Hazır Durumdaki Mamuller</span></div></div>
<div class="inp" style="left:14px;top:53px"><div class="vl"><span class="fx" style="transform: scaleX(1.0264); margin-right: 4.44px;">Depoya Girmeyen Mamuller</span></div><svg viewBox="0 0 10 8"><path d="M1 1.500l4 4 4-4"></path></svg></div>
<div class="inp" style="left:271px;top:53px"><div class="vl"><span class="fx" style="transform: scaleX(0.9809); margin-right: -0.52px;">Ülke</span></div><svg viewBox="0 0 10 8"><path d="M1 1.500l4 4 4-4"></path></svg></div>
<div class="inp" style="left:527px;top:53px"><div class="ph"><span class="fx" style="transform: scaleX(0.971); margin-right: -1px;">Firma</span></div></div>
<div class="inp" style="left:14px;top:92px"><div class="ph"><span class="fx" style="transform: scaleX(0.9137); margin-right: -2.27px;">S.ID</span></div></div>
<div class="inp" style="left:271px;top:92px"><div class="ph"><span class="fx" style="transform: scaleX(0.9163); margin-right: -3.02px;">SU.ID</span></div></div>
<div class="inp" style="left:527px;top:92px"><div class="ph"><span class="fx" style="transform: scaleX(0.9328); margin-right: -1.77px;">B.ID</span></div></div>
<div class="btn b-gray" style="left:14px;top:131px"><svg style="left:153px;width:14.5px;height:14.5px" viewBox="0 0 16 16"><path d="M8 15A7 7 0 1 1 8 1a7 7 0 0 1 0 14zm0 1A8 8 0 1 0 8 0a8 8 0 0 0 0 16z"></path><path d="M4.646 4.646a.5.5 0 0 1 .708 0L8 7.293l2.646-2.647a.5.5 0 0 1 .708.708L8.707 8l2.647 2.646a.5.5 0 0 1-.708.708L8 8.707l-2.646 2.647a.5.5 0 0 1-.708-.708L7.293 8 4.646 5.354a.5.5 0 0 1 0-.708z"></path></svg><div class="tx" style="left:175.5px"><span class="fx" style="transform: scaleX(0.9733); margin-right: -1.27px;">Temizle</span></div></div>
<div class="btn b-green" style="left:399px;top:131px"><svg style="left:106px;width:15px;height:15px" viewBox="0 0 16 16"><path fill-rule="evenodd" d="M1 8a.5.5 0 0 1 .5-.5h11.793l-3.147-3.146a.5.5 0 0 1 .708-.708l4 4a.5.5 0 0 1 0 .708l-4 4a.5.5 0 0 1-.708-.708L13.293 8.5H1.5A.5.5 0 0 1 1 8z"></path></svg><div class="tx" style="left:128.5px"><span class="fx" style="transform: scaleX(0.9552); margin-right: -6.55px;">Seçilenleri Depoya Taşı</span></div></div>
<div class="btn b-out" style="left:14px;top:170px"><svg style="left:138px;width:14px;height:14px" viewBox="0 0 16 16"><path d="M12.354 4.354a.5.5 0 0 0-.708-.708L5 10.293 1.854 7.146a.5.5 0 1 0-.708.708l3.5 3.5a.5.5 0 0 0 .708 0l7-7zm-4.208 7-.896-.897.707-.707.543.543 6.646-6.647a.5.5 0 0 1 .708.708l-7 7a.5.5 0 0 1-.708 0z"></path></svg><div class="tx" style="left:160.7px"><span class="fx" style="transform: scaleX(0.9449); margin-right: -4.38px;">Tümünü Seç</span></div></div>
<div class="btn b-out" style="left:399px;top:170px"><svg style="left:136px;width:14px;height:14px" viewBox="0 0 16 16"><path d="M8 15A7 7 0 1 1 8 1a7 7 0 0 1 0 14zm0 1A8 8 0 1 0 8 0a8 8 0 0 0 0 16z"></path><path d="M11.354 4.646a.5.5 0 0 0-.708 0l-6 6a.5.5 0 0 0 .708.708l6-6a.5.5 0 0 0 0-.708z"></path></svg><div class="tx" style="left:157.5px"><span class="fx" style="transform: scaleX(0.9579); margin-right: -3.47px;">Seçimi Kaldır</span></div></div>
</div>
<div class="pn" style="left:1087px;border-top-color:#5e3fae"><div class="hd">
<svg viewBox="0 0 16 16" style="left:14.7px;top:12.1px;width:18.7px;height:18.7px;fill:#5b6b7f"><path d="M12.5 16a3.5 3.5 0 1 0 0-7 3.5 3.5 0 0 0 0 7zm.5-5v1h1a.5.5 0 0 1 0 1h-1v1a.5.5 0 0 1-1 0v-1h-1a.5.5 0 0 1 0-1h1v-1a.5.5 0 0 1 1 0z"></path><path d="M2 1a1 1 0 0 1 1-1h10a1 1 0 0 1 1 1v6.5a.5.5 0 0 1-1 0V1H3v14h3v-2.5a.5.5 0 0 1 .5-.5H8v4H3a1 1 0 0 1-1-1V1z"></path><rect x="4" y="2" width="2" height="2" rx=".5"></rect><rect x="7" y="2" width="2" height="2" rx=".5"></rect><rect x="10" y="2" width="2" height="2" rx=".5"></rect><rect x="4" y="5" width="2" height="2" rx=".5"></rect><rect x="7" y="5" width="2" height="2" rx=".5"></rect><rect x="10" y="5" width="2" height="2" rx=".5"></rect><rect x="4" y="8" width="2" height="2" rx=".5"></rect><rect x="7" y="8" width="2" height="2" rx=".5"></rect></svg>
<div class="tt" style="left:41.6px"><span class="fx" style="transform: scaleX(1.0505); margin-right: 7.05px;">Depodaki Mamuller</span></div></div>
<div class="inp" style="left:14px;top:53px"><div class="vl"><span class="fx" style="transform: scaleX(0.9784); margin-right: -1.8px;">Peron Seçiniz</span></div><svg viewBox="0 0 10 8"><path d="M1 1.500l4 4 4-4"></path></svg></div>
<div class="inp" style="left:271px;top:53px"><div class="vl"><span class="fx" style="transform: scaleX(0.9811); margin-right: -1.56px;">Sepet Seçiniz</span></div><svg viewBox="0 0 10 8"><path d="M1 1.500l4 4 4-4"></path></svg></div>
<div class="inp" style="left:527px;top:53px"><div class="vl"><span class="fx" style="transform: scaleX(0.9809); margin-right: -0.52px;">Ülke</span></div><svg viewBox="0 0 10 8"><path d="M1 1.500l4 4 4-4"></path></svg></div>
<div class="inp" style="left:14px;top:92px"><div class="ph"><span class="fx" style="transform: scaleX(0.971); margin-right: -1px;">Firma</span></div></div>
<div class="inp" style="left:271px;top:92px"><div class="ph"><span class="fx" style="transform: scaleX(0.9137); margin-right: -2.27px;">S.ID</span></div></div>
<div class="inp" style="left:527px;top:92px"><div class="ph"><span class="fx" style="transform: scaleX(0.9163); margin-right: -3.02px;">SU.ID</span></div></div>
<div class="inp" style="left:14px;top:131px"><div class="ph"><span class="fx" style="transform: scaleX(0.9328); margin-right: -1.77px;">B.ID</span></div></div>
<div class="btn b-gray" style="left:14px;top:170px"><svg style="left:153px;width:14.5px;height:14.5px" viewBox="0 0 16 16"><path d="M8 15A7 7 0 1 1 8 1a7 7 0 0 1 0 14zm0 1A8 8 0 1 0 8 0a8 8 0 0 0 0 16z"></path><path d="M4.646 4.646a.5.5 0 0 1 .708 0L8 7.293l2.646-2.647a.5.5 0 0 1 .708.708L8.707 8l2.647 2.646a.5.5 0 0 1-.708.708L8 8.707l-2.646 2.647a.5.5 0 0 1-.708-.708L7.293 8 4.646 5.354a.5.5 0 0 1 0-.708z"></path></svg><div class="tx" style="left:175.5px"><span class="fx" style="transform: scaleX(0.9733); margin-right: -1.27px;">Temizle</span></div></div>
<div class="btn b-yel" style="left:399px;top:170px"><svg style="left:94.5px;width:15px;height:15px" viewBox="0 0 16 16"><path fill-rule="evenodd" d="M15 8a.5.5 0 0 0-.5-.5H2.707l3.147-3.146a.5.5 0 1 0-.708-.708l-4 4a.5.5 0 0 0 0 .708l4 4a.5.5 0 0 0 .708-.708L2.707 8.5H14.5A.5.5 0 0 0 15 8z"></path></svg><div class="tx" style="left:117px"><span class="fx" style="transform: scaleX(0.952); margin-right: -8.17px;">Seçilenleri Hazır Alana Taşı</span></div></div>
<div class="btn b-out" style="left:14px;top:209px"><svg style="left:138px;width:14px;height:14px" viewBox="0 0 16 16"><path d="M12.354 4.354a.5.5 0 0 0-.708-.708L5 10.293 1.854 7.146a.5.5 0 1 0-.708.708l3.5 3.5a.5.5 0 0 0 .708 0l7-7zm-4.208 7-.896-.897.707-.707.543.543 6.646-6.647a.5.5 0 0 1 .708.708l-7 7a.5.5 0 0 1-.708 0z"></path></svg><div class="tx" style="left:160.7px"><span class="fx" style="transform: scaleX(0.9449); margin-right: -4.38px;">Tümünü Seç</span></div></div>
<div class="btn b-out" style="left:399px;top:209px"><svg style="left:136px;width:14px;height:14px" viewBox="0 0 16 16"><path d="M8 15A7 7 0 1 1 8 1a7 7 0 0 1 0 14zm0 1A8 8 0 1 0 8 0a8 8 0 0 0 0 16z"></path><path d="M11.354 4.646a.5.5 0 0 0-.708 0l-6 6a.5.5 0 0 0 .708.708l6-6a.5.5 0 0 0 0-.708z"></path></svg><div class="tx" style="left:157.5px"><span class="fx" style="transform: scaleX(0.9579); margin-right: -3.47px;">Seçimi Kaldır</span></div></div>
</div>
<div class="abs" style="left:282px;top:402px;width:788px;height:375px;overflow:hidden;border-radius:0 0 6px 6px;background:#fff">
<div class="tw" style="left:0px;top:0px;width:778px;height:365px">
<div class="th" style="width:778px">
<span style="left:10.2px"><span class="fx" style="transform: scaleX(0.9883); margin-right: -0.3px;">S.ID</span></span>
<span style="left:63.7px"><span class="fx" style="transform: scaleX(1.0239); margin-right: 0.83px;">SU.ID</span></span>
<span style="left:118.7px"><span class="fx" style="transform: scaleX(1.0211); margin-right: 0.61px;">HAF.</span></span>
<span style="left:168.7px"><span class="fx" style="transform: scaleX(0.9183); margin-right: -2.89px;">ÜLKE</span></span>
<span style="left:232.7px"><span class="fx" style="transform: scaleX(1.0323); margin-right: 1.33px;">FİRMA</span></span>
<span style="left:312.7px"><span class="fx" style="transform: scaleX(1.0383); margin-right: 1.44px;">ÜRÜN</span></span>
<span style="left:412.7px"><span class="fx" style="transform: scaleX(1.0097); margin-right: 0.67px;">AÇIKLAMA</span></span>
<span style="left:501.7px"><span class="fx" style="transform: scaleX(1.0154); margin-right: 0.84px;">TOPLAM</span></span>
<span style="left:577.7px"><span class="fx" style="transform: scaleX(0.9949); margin-right: -0.23px;">PERON</span></span>
<span style="left:643.7px"><span class="fx" style="transform: scaleX(0.9032); margin-right: -4.13px;">SEPET</span></span>
<span style="left:699.9px"><span class="fx" style="transform: scaleX(0.94); margin-right: -5.94px;">AKTİF BARKOD</span></span>
<div class="abs" style="left:566.5px;top:0;width:1.5px;height:41px;background:#fff"></div>
</div>
<div class="c" style="left:10.9px;top:57.5px"><span class="fx" style="transform: scaleX(1.0005); margin-right: 0.02px;">10112</span></div>
<div class="c" style="left:64.4px;top:57.5px">9</div>
<div class="c" style="left:119.4px;top:57.5px">41</div>
<div class="c" style="left:169.4px;top:57.5px"><span class="fx" style="transform: scaleX(0.9952); margin-right: -0.2px;">Andorra</span></div>
<div class="c" style="left:233.4px;top:48.5px"><span class="fx" style="transform: scaleX(0.9057); margin-right: -4.84px;">DENEME</span><br><span class="fx" style="transform: scaleX(0.8894); margin-right: -3.17px;">CARİ</span></div>
<div class="c" style="left:313.4px;top:57.5px"><span class="fx" style="transform: scaleX(0.9839); margin-right: -1.2px;">Deneme Ürün</span></div>
<div class="c" style="left:503.4px;top:57.5px">1</div>
<div class="c" style="left:578.4px;top:57.5px">0</div>
<div class="c" style="left:644.4px;top:57.5px">0</div>
<div class="bd" style="left:701.5px;top:49.0px;width:29px">2</div>
<div class="hl1" style="top:90px;width:778px"></div>
<div class="c" style="left:10.9px;top:106.5px"><span class="fx" style="transform: scaleX(1.0005); margin-right: 0.02px;">10112</span></div>
<div class="c" style="left:64.4px;top:106.5px">10</div>
<div class="c" style="left:119.4px;top:106.5px">41</div>
<div class="c" style="left:169.4px;top:106.5px"><span class="fx" style="transform: scaleX(0.9952); margin-right: -0.2px;">Andorra</span></div>
<div class="c" style="left:233.4px;top:97.5px"><span class="fx" style="transform: scaleX(0.9057); margin-right: -4.84px;">DENEME</span><br><span class="fx" style="transform: scaleX(0.8894); margin-right: -3.17px;">CARİ</span></div>
<div class="c" style="left:313.4px;top:106.5px"><span class="fx" style="transform: scaleX(0.9839); margin-right: -1.2px;">Deneme Ürün</span></div>
<div class="c" style="left:503.4px;top:106.5px">3</div>
<div class="c" style="left:578.4px;top:106.5px">0</div>
<div class="c" style="left:644.4px;top:106.5px">0</div>
<div class="bd" style="left:701.5px;top:98.0px;width:29px">5</div>
<div class="bd" style="left:734.5px;top:98.0px;width:29px">6</div>
<div class="bd" style="left:767.5px;top:98.0px;width:29px"></div>
<div class="hl1" style="top:139px;width:778px"></div>
<div class="c" style="left:10.9px;top:173.0px"><span class="fx" style="transform: scaleX(1.0005); margin-right: 0.02px;">10113</span></div>
<div class="c" style="left:64.4px;top:173.0px">13</div>
<div class="c" style="left:119.4px;top:173.0px">41</div>
<div class="c" style="left:169.4px;top:173.0px"><span class="fx" style="transform: scaleX(0.9952); margin-right: -0.2px;">Andorra</span></div>
<div class="c" style="left:233.4px;top:164.0px"><span class="fx" style="transform: scaleX(0.9057); margin-right: -4.84px;">DENEME</span><br><span class="fx" style="transform: scaleX(0.8894); margin-right: -3.17px;">CARİ</span></div>
<div class="c" style="left:313.4px;top:173.0px"><span class="fx" style="transform: scaleX(0.9839); margin-right: -1.2px;">Deneme Ürün</span></div>
<div class="c" style="left:503.4px;top:173.0px">6</div>
<div class="c" style="left:578.4px;top:173.0px">0</div>
<div class="c" style="left:644.4px;top:173.0px">0</div>
<div class="bd" style="left:701.5px;top:146.0px;width:29px">8</div>
<div class="bd" style="left:734.5px;top:146.0px;width:29px">9</div>
<div class="bd" style="left:767.5px;top:146.0px;width:29px"></div>
<div class="bd" style="left:701.5px;top:183.0px;width:36px">14</div>
<div class="bd" style="left:742.0px;top:183.0px;width:36px">16</div>
<div class="hl1" style="top:223px;width:778px"></div>
<div class="c" style="left:10.9px;top:257.0px"><span class="fx" style="transform: scaleX(1.0005); margin-right: 0.02px;">10114</span></div>
<div class="c" style="left:64.4px;top:257.0px">14</div>
<div class="c" style="left:119.4px;top:257.0px">41</div>
<div class="c" style="left:169.4px;top:257.0px"><span class="fx" style="transform: scaleX(0.9952); margin-right: -0.2px;">Andorra</span></div>
<div class="c" style="left:233.4px;top:248.0px"><span class="fx" style="transform: scaleX(0.9057); margin-right: -4.84px;">DENEME</span><br><span class="fx" style="transform: scaleX(0.8894); margin-right: -3.17px;">CARİ</span></div>
<div class="c" style="left:313.4px;top:257.0px"><span class="fx" style="transform: scaleX(0.9839); margin-right: -1.2px;">Deneme Ürün</span></div>
<div class="c" style="left:503.4px;top:257.0px">8</div>
<div class="c" style="left:578.4px;top:257.0px">0</div>
<div class="c" style="left:644.4px;top:257.0px">0</div>
<div class="bd" style="left:701.5px;top:230.0px;width:36px">30</div>
<div class="bd" style="left:742.0px;top:230.0px;width:36px">31</div>
<div class="bd" style="left:701.5px;top:267.0px;width:36px">34</div>
<div class="bd" style="left:742.0px;top:267.0px;width:36px">35</div>
<div class="hl1" style="top:307px;width:778px"></div>
<div class="c" style="left:10.9px;top:323.5px"><span class="fx" style="transform: scaleX(0.9738); margin-right: -0.88px;">10120</span></div>
<div class="c" style="left:64.4px;top:323.5px">23</div>
<div class="c" style="left:119.4px;top:323.5px">41</div>
<div class="c" style="left:169.4px;top:323.5px"><span class="fx" style="transform: scaleX(0.9952); margin-right: -0.2px;">Andorra</span></div>
<div class="c" style="left:233.4px;top:314.5px"><span class="fx" style="transform: scaleX(0.9057); margin-right: -4.84px;">DENEME</span><br><span class="fx" style="transform: scaleX(0.8894); margin-right: -3.17px;">CARİ</span></div>
<div class="c" style="left:313.4px;top:323.5px"><span class="fx" style="transform: scaleX(0.9839); margin-right: -1.2px;">Deneme Ürün</span></div>
<div class="c" style="left:503.4px;top:323.5px">1</div>
<div class="c" style="left:578.4px;top:323.5px">0</div>
<div class="c" style="left:644.4px;top:323.5px">0</div>
<div class="bd" style="left:701.5px;top:315.0px;width:36px">90</div>
<div class="hl1" style="top:356px;width:778px"></div>
<div class="hl1" style="top:405px;width:778px"></div>
<div class="vl1" style="left:52.5px;top:42px;height:323px"></div>
<div class="vl1" style="left:107.5px;top:42px;height:323px"></div>
<div class="vl1" style="left:157.5px;top:42px;height:323px"></div>
<div class="vl1" style="left:221.5px;top:42px;height:323px"></div>
<div class="vl1" style="left:301.5px;top:42px;height:323px"></div>
<div class="vl1" style="left:401.5px;top:42px;height:323px"></div>
<div class="vl1" style="left:491.5px;top:42px;height:323px"></div>
<div class="vl1" style="left:566.5px;top:42px;height:323px"></div>
<div class="vl1" style="left:632.5px;top:42px;height:323px"></div>
<div class="vl1" style="left:690.5px;top:42px;height:323px"></div>
</div>
<div class="abs" style="left:778px;top:0;width:10px;height:365px;background:#222e3e"></div>
<div class="abs" style="left:778px;top:0;width:10px;height:97px;background:#c8cfd9;border-radius:5px"></div>
<div class="abs" style="left:0;top:365px;width:778px;height:10px;background:#222e3e"></div>
<div class="abs" style="left:0;top:365px;width:679px;height:10px;background:#c8cfd9;border-radius:5px"></div>
</div>
<div class="abs" style="left:1088px;top:441px;width:788px;height:336px;overflow:hidden;border-radius:0 0 6px 6px;background:#fff">
<div class="tw" style="left:0px;top:0px;width:788px;height:326px">
<div class="th" style="width:788px">
<span style="left:10.2px"><span class="fx" style="transform: scaleX(0.9883); margin-right: -0.3px;">S.ID</span></span>
<span style="left:63.7px"><span class="fx" style="transform: scaleX(1.0239); margin-right: 0.83px;">SU.ID</span></span>
<span style="left:118.7px"><span class="fx" style="transform: scaleX(1.0211); margin-right: 0.61px;">HAF.</span></span>
<span style="left:168.7px"><span class="fx" style="transform: scaleX(0.9183); margin-right: -2.89px;">ÜLKE</span></span>
<span style="left:232.7px"><span class="fx" style="transform: scaleX(1.0323); margin-right: 1.33px;">FİRMA</span></span>
<span style="left:312.7px"><span class="fx" style="transform: scaleX(1.0383); margin-right: 1.44px;">ÜRÜN</span></span>
<span style="left:412.7px"><span class="fx" style="transform: scaleX(1.0097); margin-right: 0.67px;">AÇIKLAMA</span></span>
<span style="left:502.9px"><span class="fx" style="transform: scaleX(1.0154); margin-right: 0.84px;">TOPLAM</span></span>
<span style="left:577.7px"><span class="fx" style="transform: scaleX(0.9949); margin-right: -0.23px;">PERON</span></span>
<span style="left:642.2px"><span class="fx" style="transform: scaleX(0.9032); margin-right: -4.13px;">SEPET</span></span>
<span style="left:700.9px"><span class="fx" style="transform: scaleX(0.94); margin-right: -5.94px;">AKTİF BARKOD</span></span>
</div>
<div class="c" style="left:10.9px;top:75.0px"><span class="fx" style="transform: scaleX(0.9738); margin-right: -0.88px;">10109</span></div>
<div class="c" style="left:64.4px;top:75.0px">6</div>
<div class="c" style="left:119.4px;top:75.0px">41</div>
<div class="c" style="left:169.4px;top:75.0px"><span class="fx" style="transform: scaleX(0.9952); margin-right: -0.2px;">Andorra</span></div>
<div class="c" style="left:233.4px;top:66.0px"><span class="fx" style="transform: scaleX(0.9057); margin-right: -4.84px;">DENEME</span><br><span class="fx" style="transform: scaleX(0.8894); margin-right: -3.17px;">CARİ</span></div>
<div class="c" style="left:313.4px;top:75.0px"><span class="fx" style="transform: scaleX(0.9839); margin-right: -1.2px;">Deneme Ürün</span></div>
<div class="c" style="left:503.4px;top:75.0px">5</div>
<div class="c" style="left:579.4px;top:75.0px">3</div>
<div class="c" style="left:644.4px;top:75.0px">5</div>
<div class="bd" style="left:702.0px;top:48.3px;width:36px">24</div>
<div class="bd" style="left:741.8px;top:48.3px;width:36px">25</div>
<div class="bd" style="left:781.8px;top:48.3px;width:36px"></div>
<div class="bd" style="left:702.0px;top:85.3px;width:36px">28</div>
<div class="hl1" style="top:125px;width:788px"></div>
<div class="vl1" style="left:52.5px;top:42px;height:84px"></div>
<div class="vl1" style="left:107.5px;top:42px;height:84px"></div>
<div class="vl1" style="left:157.5px;top:42px;height:84px"></div>
<div class="vl1" style="left:221.5px;top:42px;height:84px"></div>
<div class="vl1" style="left:301.5px;top:42px;height:84px"></div>
<div class="vl1" style="left:401.5px;top:42px;height:84px"></div>
<div class="vl1" style="left:491.5px;top:42px;height:84px"></div>
<div class="vl1" style="left:567.5px;top:42px;height:84px"></div>
<div class="vl1" style="left:632.5px;top:42px;height:84px"></div>
<div class="vl1" style="left:690.5px;top:42px;height:84px"></div>
</div>
<div class="abs" style="left:0;top:326px;width:788px;height:10px;background:#222e3e"></div>
<div class="abs" style="left:0;top:326px;width:696px;height:10px;background:#c8cfd9;border-radius:5px"></div>
</div>
<div class="fab" style="left:1754px;top:864px"><svg viewBox="0 0 640 512" style="left:12.500px;top:15px;width:31px;height:25px"><path d="M32 224h32v192H32a31.960 31.960 0 0 1-32-32V256a31.960 31.960 0 0 1 32-32zm512-48v272a64.060 64.060 0 0 1-64 64H160a64.060 64.060 0 0 1-64-64V176a79.974 79.974 0 0 1 80-80h112V32a32 32 0 0 1 64 0v64h112a79.974 79.974 0 0 1 80 80zm-280 80a40 40 0 1 0-40 40 39.997 39.997 0 0 0 40-40zm-8 128h-64v32h64zm96 0h-64v32h64zm104-128a40 40 0 1 0-40 40 39.997 39.997 0 0 0 40-40zm-8 128h-64v32h64zm192-128v128a31.960 31.960 0 0 1-32 32h-32V224h32a31.960 31.960 0 0 1 32 32z"></path></svg></div>
<div class="fab" style="left:1829px;top:864px"><svg viewBox="0 0 28 22" style="left:14px;top:17px;width:28px;height:22px;fill:none" stroke="#0d7bff" stroke-width="2.2"><path d="M9.500 1.500c4.600 0 8 2.700 8 6.200s-3.400 6.200-8 6.200c-1 0-2-.100-2.900-.400L2.200 15l1.400-3.300C2.300 10.600 1.500 9.200 1.500 7.700c0-3.500 3.400-6.200 8-6.200z"></path><path d="M19.500 6.200c3.800.400 6.700 2.800 6.700 5.800 0 1.500-.700 2.800-1.900 3.800l1.300 3.200-4.200-1.500c-.9.300-1.900.400-2.900.400-2.800 0-5.200-1-6.600-2.700"></path></svg></div>
<div class="rb" style="left:1794px;top:862px">0</div><div class="rb" style="left:1868.500px;top:862px">0</div>


</body></html>
